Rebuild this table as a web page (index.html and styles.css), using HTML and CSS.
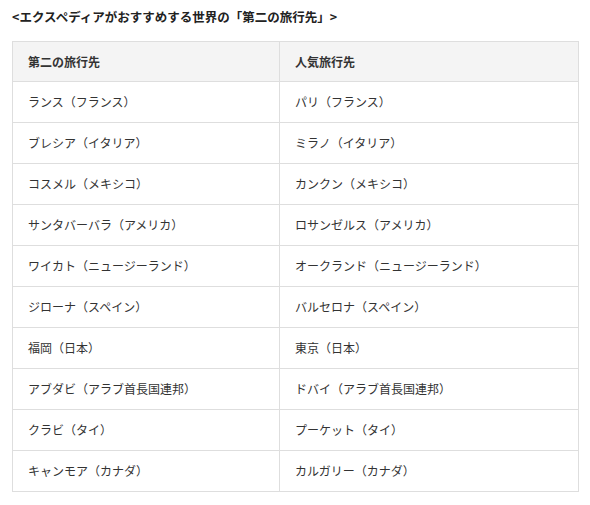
FILE: index.html
```html
<!DOCTYPE html>
<html lang="ja">
<head>
<meta charset="utf-8">
<link rel="stylesheet" href="styles.css">
</head>
<body>
<div class="wrap">
  <p class="title">&lt;エクスペディアがおすすめする世界の「第二の旅行先」&gt;</p>
  <table class="tbl">
    <thead>
      <tr><th class="c1">第二の旅行先</th><th>人気旅行先</th></tr>
    </thead>
    <tbody>
      <tr><td>ランス（フランス）</td><td>パリ（フランス）</td></tr>
      <tr><td>ブレシア（イタリア）</td><td>ミラノ（イタリア）</td></tr>
      <tr><td>コスメル（メキシコ）</td><td>カンクン（メキシコ）</td></tr>
      <tr><td>サンタバーバラ（アメリカ）</td><td>ロサンゼルス（アメリカ）</td></tr>
      <tr><td>ワイカト（ニュージーランド）</td><td>オークランド（ニュージーランド）</td></tr>
      <tr><td>ジローナ（スペイン）</td><td>バルセロナ（スペイン）</td></tr>
      <tr><td>福岡（日本）</td><td>東京（日本）</td></tr>
      <tr><td>アブダビ（アラブ首長国連邦）</td><td>ドバイ（アラブ首長国連邦）</td></tr>
      <tr><td>クラビ（タイ）</td><td>プーケット（タイ）</td></tr>
      <tr><td>キャンモア（カナダ）</td><td>カルガリー（カナダ）</td></tr>
    </tbody>
  </table>
</div>
</body>
</html>
```

FILE: styles.css
```css
html, body {
  margin: 0;
  padding: 0;
  background: #fff;
}
body {
  font-family: "Noto Sans CJK JP", "Noto Sans", sans-serif;
  color: #333;
}
.wrap {
  padding: 7px 12px 0 12px;
}
.title {
  margin: 0;
  font-size: 12.5px;
  font-weight: bold;
  line-height: 20px;
  color: #222;
}
.tbl {
  margin-top: 14px;
  width: 567px;
  border-collapse: collapse;
  font-size: 12px;
}
.tbl th, .tbl td {
  border: 1px solid #dedede;
  text-align: left;
  padding: 0 15px;
  height: 40px;
  line-height: 16px;
  vertical-align: middle;
}
.tbl th {
  background: #f4f4f4;
  font-weight: bold;
  height: 39px;
}
.tbl .c1 {
  width: 236px;
}
```
